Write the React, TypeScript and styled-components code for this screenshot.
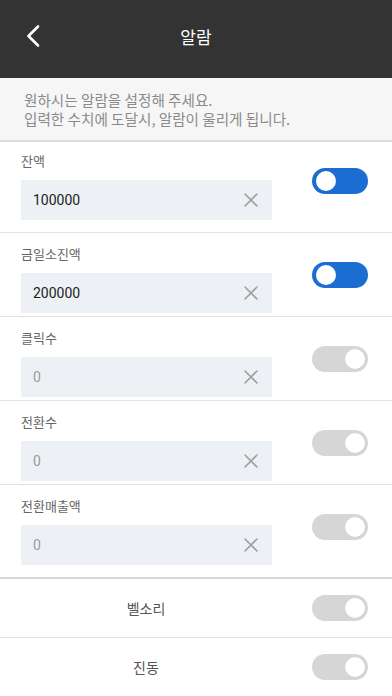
import React from 'react';
import styled, { createGlobalStyle } from 'styled-components';

const GlobalStyle = createGlobalStyle`
  html, body {
    margin: 0;
    padding: 0;
    background: #ffffff;
  }
  body {
    font-family: 'Roboto', 'Noto Sans CJK KR', sans-serif;
    -webkit-font-smoothing: antialiased;
  }
  * {
    box-sizing: border-box;
  }
`;

const Screen = styled.div`
  width: 392px;
  height: 696px;
  overflow: hidden;
  display: flex;
  flex-direction: column;
  background: #ffffff;
`;

const Header = styled.header`
  height: 78px;
  flex-shrink: 0;
  background: #333333;
  display: grid;
  grid-template-columns: 64px 1fr 64px;
  align-items: center;
`;

const BackButton = styled.button`
  border: 0;
  background: transparent;
  padding: 0 0 6px 26px;
  height: 100%;
  display: flex;
  align-items: center;
  cursor: pointer;
`;

const Title = styled.h1`
  margin: 0 0 6px;
  text-align: center;
  color: #ffffff;
  font-size: 17px;
  font-weight: 400;
  font-family: 'Noto Sans CJK KR', sans-serif;
`;

const Notice = styled.div`
  background: #f7f6f7;
  padding: 12px 24px 12px;
  border-bottom: 2px solid #dcdcdc;
  color: #8a8a8a;
  font-size: 14.6px;
  line-height: 19px;
  font-family: 'Noto Sans CJK KR', sans-serif;
`;

const FieldRow = styled.div<{ $first?: boolean; $last?: boolean }>`
  display: flex;
  align-items: flex-start;
  padding: ${({ $first }) => ($first ? '9px' : '11px')} 24px
    ${({ $first, $last }) => ($first || $last ? '12px' : '3px')} 21px;
  border-bottom: ${({ $last }) => ($last ? '2px solid #d8d8d8' : '1px solid #e2e2e2')};
`;

const FieldBody = styled.div`
  flex: 1;
  display: flex;
  flex-direction: column;
  gap: 9px;
  margin-right: 40px;
`;

const FieldLabel = styled.label`
  color: #666666;
  font-size: 13px;
  line-height: 20px;
  font-family: 'Noto Sans CJK KR', sans-serif;
`;

const InputBox = styled.div`
  height: 40px;
  width: 251px;
  background: #edf1f5;
  display: flex;
  align-items: center;
  padding: 0 14px 0 12px;
`;

const ValueInput = styled.input<{ $muted?: boolean }>`
  flex: 1;
  min-width: 0;
  border: 0;
  outline: none;
  background: transparent;
  padding: 0;
  font-family: 'Roboto', sans-serif;
  font-size: 14px;
  color: ${({ $muted }) => ($muted ? '#9a9a9a' : '#222222')};
`;

const ClearButton = styled.button`
  border: 0;
  background: transparent;
  padding: 0;
  width: 14px;
  height: 14px;
  display: flex;
  align-items: center;
  justify-content: center;
  cursor: pointer;
`;

const Switch = styled.button<{ $on: boolean; $top?: number }>`
  position: relative;
  flex-shrink: 0;
  width: 56px;
  height: 26px;
  margin-top: ${({ $top }) => $top ?? 0}px;
  border: 0;
  padding: 0;
  border-radius: 13px;
  background: ${({ $on }) => ($on ? '#1b6dd1' : '#d6d6d6')};
  cursor: pointer;
`;

const Knob = styled.span<{ $on: boolean }>`
  position: absolute;
  top: 3px;
  ${({ $on }) => ($on ? 'left: 4px;' : 'right: 3px;')}
  width: 20px;
  height: 20px;
  border-radius: 50%;
  background: #ffffff;
  box-shadow: ${({ $on }) => ($on ? 'none' : '0 0 0 0.5px #cfcfcf')};
`;

const OptionRow = styled.div<{ $last?: boolean }>`
  height: ${({ $last }) => ($last ? '58px' : '59px')};
  display: flex;
  align-items: center;
  padding-right: 24px;
  border-bottom: ${({ $last }) => ($last ? '0' : '1px solid #e2e2e2')};
`;

const OptionLabel = styled.span`
  flex: 1;
  text-align: center;
  padding-right: 20px;
  color: #555555;
  font-size: 14px;
  font-family: 'Noto Sans CJK KR', sans-serif;
`;

const ChevronLeft = () => (
  <svg width="14" height="22" viewBox="0 0 14 22" fill="none">
    <path d="M12 1.5L2.5 11L12 20.5" stroke="#ffffff" strokeWidth="2.6" strokeLinecap="round" strokeLinejoin="round" />
  </svg>
);

const CrossIcon = () => (
  <svg width="14" height="14" viewBox="0 0 14 14" fill="none">
    <path d="M1 1L13 13M13 1L1 13" stroke="#9e9e9e" strokeWidth="1.6" strokeLinecap="round" />
  </svg>
);

const Toggle = ({ on, top }: { on: boolean; top?: number }) => (
  <Switch $on={on} $top={top} aria-pressed={on}>
    <Knob $on={on} />
  </Switch>
);

const fields = [
  { label: '잔액', value: '100000', on: true },
  { label: '금일소진액', value: '200000', on: true },
  { label: '클릭수', value: '0', on: false },
  { label: '전환수', value: '0', on: false },
  { label: '전환매출액', value: '0', on: false },
];

const options = [
  { label: '벨소리', on: false },
  { label: '진동', on: false },
];

export default function App() {
  return (
    <Screen>
      <GlobalStyle />
      <Header>
        <BackButton aria-label="뒤로">
          <ChevronLeft />
        </BackButton>
        <Title>알람</Title>
        <span />
      </Header>
      <Notice>
        원하시는 알람을 설정해 주세요.
        <br />
        입력한 수치에 도달시, 알람이 울리게 됩니다.
      </Notice>
      {fields.map((f, i) => (
        <FieldRow key={f.label} $first={i === 0} $last={i === fields.length - 1}>
          <FieldBody>
            <FieldLabel>{f.label}</FieldLabel>
            <InputBox>
              <ValueInput readOnly value={f.value} $muted={!f.on} />
              <ClearButton aria-label="지우기">
                <CrossIcon />
              </ClearButton>
            </InputBox>
          </FieldBody>
          <Toggle on={f.on} top={i === 0 ? 17 : 18} />
        </FieldRow>
      ))}
      {options.map((o, i) => (
        <OptionRow key={o.label} $last={i === options.length - 1}>
          <OptionLabel>{o.label}</OptionLabel>
          <Toggle on={o.on} />
        </OptionRow>
      ))}
    </Screen>
  );
}
